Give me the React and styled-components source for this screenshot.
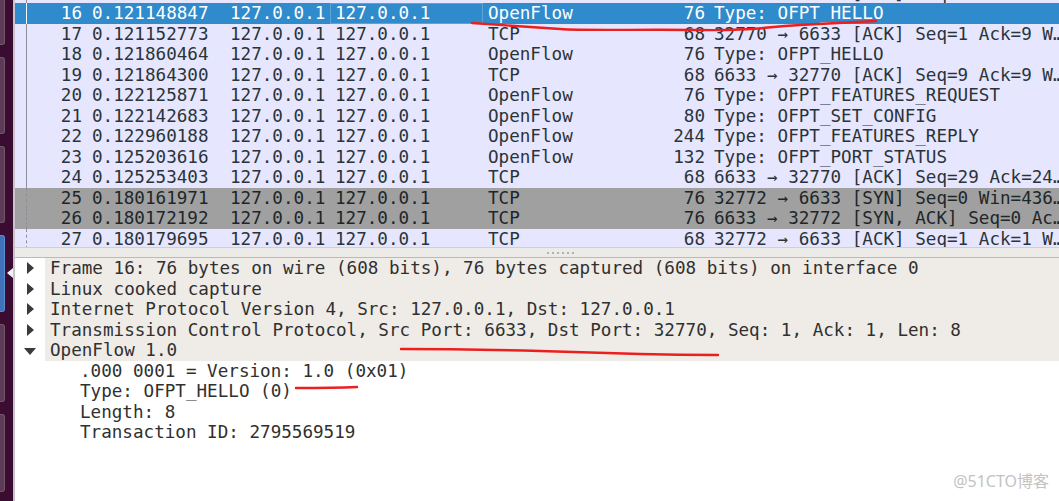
import styled, { createGlobalStyle, css } from 'styled-components';

const GlobalStyle = createGlobalStyle`
  html, body {
    margin: 0;
    padding: 0;
    background: #ffffff;
    overflow: hidden;
  }
`;

const MONO = `"DejaVu Sans Mono", "Liberation Mono", monospace`;

const packets = [
  { no: 15, time: '0.121117286', proto: 'TCP', len: 68, info: '32770 → 6633 [ACK] Seq=1 Ack=1 W…', rel: 'solid' },
  { no: 16, time: '0.121148847', proto: 'OpenFlow', len: 76, info: 'Type: OFPT_HELLO', rel: 'solid', selected: true },
  { no: 17, time: '0.121152773', proto: 'TCP', len: 68, info: '32770 → 6633 [ACK] Seq=1 Ack=9 W…', rel: 'solid' },
  { no: 18, time: '0.121860464', proto: 'OpenFlow', len: 76, info: 'Type: OFPT_HELLO', rel: 'solid' },
  { no: 19, time: '0.121864300', proto: 'TCP', len: 68, info: '6633 → 32770 [ACK] Seq=9 Ack=9 W…', rel: 'solid' },
  { no: 20, time: '0.122125871', proto: 'OpenFlow', len: 76, info: 'Type: OFPT_FEATURES_REQUEST', rel: 'solid' },
  { no: 21, time: '0.122142683', proto: 'OpenFlow', len: 80, info: 'Type: OFPT_SET_CONFIG', rel: 'solid' },
  { no: 22, time: '0.122960188', proto: 'OpenFlow', len: 244, info: 'Type: OFPT_FEATURES_REPLY', rel: 'solid' },
  { no: 23, time: '0.125203616', proto: 'OpenFlow', len: 132, info: 'Type: OFPT_PORT_STATUS', rel: 'solid' },
  { no: 24, time: '0.125253403', proto: 'TCP', len: 68, info: '6633 → 32770 [ACK] Seq=29 Ack=24…', rel: 'solid' },
  { no: 25, time: '0.180161971', proto: 'TCP', len: 76, info: '32772 → 6633 [SYN] Seq=0 Win=436…', rel: 'dashed', gray: true },
  { no: 26, time: '0.180172192', proto: 'TCP', len: 76, info: '6633 → 32772 [SYN, ACK] Seq=0 Ac…', rel: 'dashed', gray: true },
  { no: 27, time: '0.180179695', proto: 'TCP', len: 68, info: '32772 → 6633 [ACK] Seq=1 Ack=1 W…', rel: 'dashed' },
];

const treeItems = [
  { text: 'Frame 16: 76 bytes on wire (608 bits), 76 bytes captured (608 bits) on interface 0', level: 0 },
  { text: 'Linux cooked capture', level: 0 },
  { text: 'Internet Protocol Version 4, Src: 127.0.0.1, Dst: 127.0.0.1', level: 0 },
  { text: 'Transmission Control Protocol, Src Port: 6633, Dst Port: 32770, Seq: 1, Ack: 1, Len: 8', level: 0 },
  { text: 'OpenFlow 1.0', level: 0, open: true },
  { text: '.000 0001 = Version: 1.0 (0x01)', level: 1 },
  { text: 'Type: OFPT_HELLO (0)', level: 1 },
  { text: 'Length: 8', level: 1 },
  { text: 'Transaction ID: 2795569519', level: 1 },
];

const launcherTiles = [
  { h: 75, top: -32 },
  { h: 75 },
  { h: 75 },
  { h: 75, active: true },
  { h: 76 },
  { h: 76 },
  { h: 76 },
];

export default function App() {
  return (
    <>
      <GlobalStyle />
      <Screen>
        <Launcher>
          {launcherTiles.map((t, i) => (
            <Tile key={i} h={t.h} top={t.top} active={t.active}>
              {t.active && <ActivePip />}
            </Tile>
          ))}
        </Launcher>
        <Window>
          <PacketList>
            <ListRows>
              {packets.map(p => (
                <PacketRow key={p.no} selected={p.selected} gray={p.gray}>
                  <NoCell>
                    <RelLine rel={p.rel} selected={p.selected} />
                    <NoText>{p.no}</NoText>
                  </NoCell>
                  <Cell>{p.time}</Cell>
                  <Cell>127.0.0.1</Cell>
                  <Cell focused={p.selected}>127.0.0.1</Cell>
                  <Cell>{p.proto}</Cell>
                  <Cell right>{p.len}</Cell>
                  <InfoCell>{p.info}</InfoCell>
                </PacketRow>
              ))}
            </ListRows>
          </PacketList>
          <Splitter>
            <Grip>
              {[0, 1, 2, 3, 4, 5].map(i => <GripDot key={i} />)}
            </Grip>
          </Splitter>
          <DetailTree>
            {treeItems.map((item, i) => (
              <TreeRow key={i}>
                <Expander>
                  {item.level === 0 && <Arrow open={item.open} />}
                </Expander>
                <TreeText level={item.level}>{item.text}</TreeText>
              </TreeRow>
            ))}
          </DetailTree>
        </Window>
        <Annotations viewBox="0 0 1059 501" width="1059" height="501">
          <path d="M472 23 C 500 25, 530 27, 560 29 S 640 29, 700 30 S 760 27, 800 25 S 860 22, 876 21" />
          <path d="M401 349 C 450 349, 500 350, 540 351 S 600 353, 640 354 S 690 355, 718 355" />
          <path d="M296 388 C 315 388, 335 388, 357 387" />
        </Annotations>
        <Watermark>@51CTO博客</Watermark>
      </Screen>
    </>
  );
}

const Screen = styled.div`
  position: relative;
  display: flex;
  width: 1059px;
  height: 501px;
  overflow: hidden;
  font-family: ${MONO};
`;

const Launcher = styled.div`
  display: flex;
  flex-direction: column;
  gap: 12px;
  width: 13px;
  flex-shrink: 0;
  background: #3b0c31;
  border-right: 2px solid #c9c3cb;
`;

const Tile = styled.div`
  position: relative;
  flex-shrink: 0;
  width: 4px;
  height: ${({ h }) => h}px;
  margin-top: ${({ top }) => top || 0}px;
  border-radius: 0 3px 3px 0;
  background: ${({ active }) => (active ? '#3f72ba' : '#5d3b57')};
  border: 1px solid ${({ active }) => (active ? '#5b8ccc' : '#74566f')};
  border-left: none;
`;

const ActivePip = styled.span`
  position: absolute;
  right: -9px;
  top: 32px;
  width: 0;
  height: 0;
  border-top: 5px solid transparent;
  border-bottom: 5px solid transparent;
  border-right: 6px solid #f2f2f2;
`;

const Window = styled.div`
  flex: 1;
  display: flex;
  flex-direction: column;
  min-width: 0;
`;

const PacketList = styled.div`
  height: 247px;
  overflow: hidden;
  background: #e7e6ff;
  border-bottom: 1px solid #cfcde0;
  flex-shrink: 0;
`;

const ListRows = styled.div`
  margin-top: -17.5px;
`;

const PacketRow = styled.div`
  display: grid;
  grid-template-columns: 72px 138px 105px 153px 117px 109px 1fr;
  height: 20.5px;
  line-height: 20.5px;
  font-size: 17.6px;
  color: #2a3438;
  background: #e7e6ff;
  ${({ gray }) => gray && css`
    background: #a0a0a0;
    color: #1e2628;
  `}
  ${({ selected }) => selected && css`
    background: #2f8bcb;
    color: #ffffff;
  `}
`;

const Cell = styled.div`
  padding: 0 5px;
  white-space: nowrap;
  overflow: hidden;
  text-align: ${({ right }) => (right ? 'right' : 'left')};
  ${({ right }) => right && css`padding-right: 4px;`}
  ${({ focused }) => focused && css`
    box-shadow: inset 0 0 0 1px #5ea3d6;
  `}
`;

const NoCell = styled.div`
  display: flex;
  padding-right: 5px;
`;

const RelLine = styled.span`
  width: 0;
  margin-left: 11px;
  border-left: 1px ${({ rel }) => rel} ${({ selected }) => (selected ? '#f4f8fc' : '#8e8e9a')};
`;

const NoText = styled.span`
  flex: 1;
  text-align: right;
`;

const InfoCell = styled.div`
  padding-left: 5px;
  white-space: nowrap;
  overflow: hidden;
`;

const Splitter = styled.div`
  height: 9px;
  flex-shrink: 0;
  display: flex;
  align-items: center;
  justify-content: center;
  background: #edebe8;
`;

const Grip = styled.div`
  display: flex;
  gap: 3px;
  margin-left: 46px;
`;

const GripDot = styled.span`
  width: 2px;
  height: 2px;
  background: #b4b1ad;
`;

const DetailTree = styled.div`
  flex: 1;
  background: #ffffff;
  border-top: 1px solid #bdbab6;
`;

const TreeRow = styled.div`
  display: grid;
  grid-template-columns: 30px 1fr;
  height: 20.5px;
  line-height: 20.5px;
  font-size: 17.6px;
  color: #303030;
`;

const Expander = styled.div`
  display: flex;
  align-items: center;
  justify-content: center;
`;

const Arrow = styled.span`
  width: 0;
  height: 0;
  ${({ open }) => (open
    ? css`
      border-left: 6px solid transparent;
      border-right: 6px solid transparent;
      border-top: 7px solid #3a3a3a;
      margin-top: 2px;
    `
    : css`
      border-top: 6px solid transparent;
      border-bottom: 6px solid transparent;
      border-left: 7px solid #3a3a3a;
    `)}
`;

const TreeText = styled.div`
  white-space: nowrap;
  overflow: hidden;
  padding-left: ${({ level }) => (level === 0 ? 5 : 35)}px;
  background: ${({ level }) => (level === 0 ? '#efebe7' : '#ffffff')};
`;

const Annotations = styled.svg`
  position: absolute;
  left: 0;
  top: 0;
  pointer-events: none;
  fill: none;
  stroke: #ec1f1f;
  stroke-width: 2.4;
  stroke-linecap: round;
`;

const Watermark = styled.div`
  position: absolute;
  right: 10px;
  bottom: 9px;
  font-family: "Noto Sans", "Noto Sans CJK SC", sans-serif;
  font-size: 16px;
  color: #c3c3c3;
`;
